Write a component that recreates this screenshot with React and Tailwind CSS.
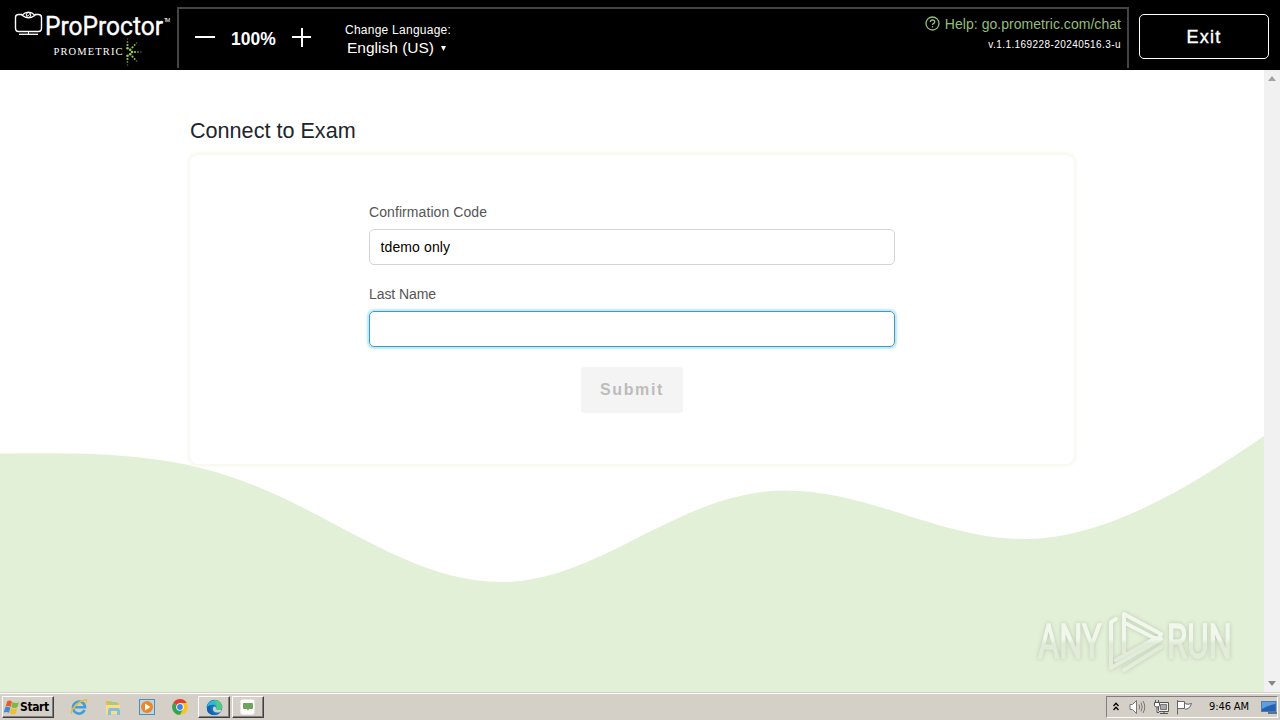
import React, { useState } from 'react'

const Logo = () => (
    <svg width="177" height="70" viewBox="0 0 177 70" fill="none" className="shrink-0">
        {/* monitor with the eye on top */}
        <path d="M22 14.5H18.5Q15.5 14.5 15.5 17.5V28Q15.5 31.5 18.5 31.5H38.5Q41.5 31.5 41.5 28V17.5Q41.5 14.5 38.5 14.5H35" stroke="#fff" strokeWidth="1.4" />
        <path d="M22 15.3Q28.5 9 35 15.3Q28.5 20.5 22 15.3Z" stroke="#fff" strokeWidth="1.2" />
        <circle cx="28.5" cy="15" r="2.3" stroke="#fff" />
        <path d="M27.2 15L28.2 16L30 13.5" stroke="#fff" strokeWidth="0.8" />
        <path d="M19 34.3H38" stroke="#fff" strokeWidth="1.3" />
        <path d="M28.5 31.5V34" stroke="#fff" />
        <text x="45" y="34.5" fontFamily="Roboto, sans-serif" fontSize="25" fill="#fff" stroke="#fff" strokeWidth="0.35" textLength="118" lengthAdjust="spacingAndGlyphs">ProProctor</text>
        <text x="164" y="22" fontFamily="Roboto, sans-serif" fontSize="5" fill="#fff" textLength="6">TM</text>
        <text x="53.5" y="55" fontFamily="Liberation Serif, serif" fontSize="10.5" fill="#fff" textLength="69" lengthAdjust="spacing">PROMETRIC</text>
        <g fill="#9ccb4e">
            <circle cx="127.5" cy="39" r="0.8" opacity="0.5" />
            <circle cx="127.5" cy="42" r="0.9" opacity="0.7" />
            <circle cx="127.5" cy="45" r="1.1" />
            <circle cx="127.5" cy="48.3" r="1.3" />
            <circle cx="127.5" cy="55.7" r="1.3" />
            <circle cx="127.5" cy="59" r="1.1" />
            <circle cx="127.5" cy="62" r="0.9" opacity="0.7" />
            <circle cx="127.5" cy="65" r="0.8" opacity="0.5" />
            <circle cx="130.2" cy="49.8" r="1.3" />
            <circle cx="132.5" cy="47.3" r="1.1" />
            <circle cx="134.6" cy="45" r="0.9" />
            <circle cx="136.5" cy="43" r="0.8" opacity="0.6" />
            <circle cx="130.2" cy="54.2" r="1.3" />
            <circle cx="132.5" cy="56.7" r="1.1" />
            <circle cx="134.6" cy="59" r="0.9" />
            <circle cx="136.5" cy="61" r="0.8" opacity="0.6" />
            <circle cx="132" cy="52" r="1.3" />
            <circle cx="135" cy="52" r="1.1" />
            <circle cx="138" cy="52" r="0.9" opacity="0.7" />
            <circle cx="141" cy="52" r="0.8" opacity="0.5" />
        </g>
    </svg>
)

const Header = () => (
    <header className="flex h-[70px] shrink-0 bg-black text-white">
        <Logo />
        <div className="mt-[7px] flex h-[61px] w-[952px] justify-between border-x-2 border-t-2 border-[#444]">
            <div className="flex">
                <div className="flex h-[58px] items-center pl-4">
                    <button aria-label="Zoom out" className="h-5 w-5">
                        <svg width="20" height="20"><path d="M0 9H20" stroke="#fff" strokeWidth="2" /></svg>
                    </button>
                    <span className="ml-4 w-[46px] pt-[2px] text-[17.5px] font-bold">100%</span>
                    <button aria-label="Zoom in" className="ml-[15px] h-5 w-5">
                        <svg width="20" height="20"><path d="M0 9H19M10 -1V19" stroke="#fff" strokeWidth="2" /></svg>
                    </button>
                </div>
                <div className="ml-[33px] pt-[13px]">
                    <p className="text-[12px] leading-4 tracking-[0.25px]">Change Language:</p>
                    <button className="flex items-center pl-[2px] text-[15.5px] leading-5">
                        English (US)
                        <svg width="5" height="5" className="ml-[7px]"><path d="M0 0H5L2.5 5Z" fill="#fff" /></svg>
                    </button>
                </div>
            </div>
            <div className="flex flex-col items-end pt-[5px] pr-[6px]">
                <a className="flex items-center text-[14px] leading-5 tracking-[0.04px] text-[#94bd7c]">
                    <svg width="15" height="15" viewBox="0 0 15 15" fill="none" className="mr-[5px] mb-[2px]">
                        <circle cx="7.5" cy="7.5" r="6.5" stroke="#94bd7c" strokeWidth="1.3" />
                        <path d="M5.3 6Q5.5 4 7.5 4Q9.7 4 9.7 6Q9.7 7 8.3 7.7Q7.5 8.1 7.5 9" stroke="#94bd7c" strokeWidth="1.3" />
                        <circle cx="7.5" cy="10.8" r="0.8" fill="#94bd7c" />
                    </svg>
                    Help: go.prometric.com/chat
                </a>
                <span className="mt-[3px] text-[10px] leading-4 tracking-[0.42px]">v.1.1.169228-20240516.3-u</span>
            </div>
        </div>
        <button className="mt-[14px] ml-[10px] h-[45px] w-[130px] rounded-[5px] border border-white pt-px text-[18px] font-medium tracking-[1.2px] [-webkit-text-stroke:0.4px_white]">
            Exit
        </button>
    </header>
)

const ConnectForm = () => {
    const [code, setCode] = useState('tdemo only');
    const [lastName, setLastName] = useState('');

    return (
        <div className="ml-[190px] w-[884px] pt-[46px]">
            <h1 className="h-[39px] text-[21.6px] leading-[30px] text-[#212529]">Connect to Exam</h1>
            <form className="flex h-[309px] flex-col items-center rounded-lg bg-white pt-[47px] shadow-[0_0_4px_2px_#f5f7ea]">
                <div className="w-[526px]">
                    <label className="block text-[14px] leading-5 tracking-[0.08px] text-[#555]">Confirmation Code</label>
                    <input
                        type="text"
                        className="mt-[7px] block h-9 w-full rounded-[5px] border border-[#d4d4d4] px-[10.5px] text-[14px] tracking-[0.12px] text-black outline-none"
                        value={code}
                        onChange={(e) => setCode(e.target.value)}
                    />
                </div>
                <div className="mt-[19px] w-[526px]">
                    <label className="block text-[14px] leading-5 tracking-[-0.08px] text-[#555]">Last Name</label>
                    <input
                        type="text"
                        className="mt-[7px] block h-9 w-full rounded-[5px] border border-[#3d9cc0] px-[11px] text-[14px] text-black shadow-[0_0_2px_2px_#b9e9fb] outline-none"
                        value={lastName}
                        onChange={(e) => setLastName(e.target.value)}
                    />
                </div>
                <button type="button" disabled className="mt-5 h-[46px] w-[102px] rounded-[3px] bg-[#f4f4f4] text-[16px] font-bold tracking-[1.6px] text-[#bcbcbc]">
                    Submit
                </button>
            </form>
        </div>
    )
}

const Wave = () => (
    <svg width="1264" height="622" viewBox="0 70 1264 622" className="absolute top-0 left-0">
        <path
            d="M0 453.5C100 452 170 454 240 480C335 514 410 582 502 582C600 582 680 490.5 785 490.5C870 490.5 940 539 1024 539C1110 539 1200 480 1264 436V692H0Z"
            fill="#e3f0d8"
        />
    </svg>
)

const Watermark = () => (
    <svg width="216" height="80" viewBox="0 0 216 80" className="absolute top-[536px] left-[1034px] drop-shadow-[0_0_2px_#8b9b8077]">
        <defs>
            <linearGradient id="fade" gradientUnits="userSpaceOnUse" x1="0" y1="0" x2="0" y2="70">
                <stop offset="0.47" stopColor="#f1f7ec" />
                <stop offset="0.54" stopColor="#e1ead8" />
                <stop offset="1" stopColor="#e6efde" />
            </linearGradient>
            <linearGradient id="textFade" gradientUnits="userSpaceOnUse" x1="0" y1="-52" x2="0" y2="18">
                <stop offset="0.47" stopColor="#f1f7ec" />
                <stop offset="0.54" stopColor="#e1ead8" />
                <stop offset="1" stopColor="#e6efde" />
            </linearGradient>
        </defs>
        <g fontFamily="Roboto, sans-serif" fontSize="49" fill="url(#textFade)" stroke="url(#textFade)" strokeWidth="1.4">
            <text transform="translate(4 52) scale(0.665 1)">ANY</text>
            <text transform="translate(133 52) scale(0.67 1)">RUN</text>
        </g>
        <g fill="none" stroke="url(#fade)" strokeWidth="4" strokeLinecap="round" strokeLinejoin="round">
            <path d="M82 13L77 16V62L127 33" />
            <path d="M90 47V8L127 28L124 34L91 17" />
            <path d="M82 54L122 32M90 64L127 41" />
        </g>
    </svg>
)

const ExamPage = () => (
    <main className="flex min-h-0 flex-1">
        <div className="relative w-[1264px] overflow-hidden bg-white">
            <Wave />
            <div className="relative">
                <ConnectForm />
            </div>
            <Watermark />
        </div>
        <div className="flex w-4 flex-col items-center justify-between bg-[#f1f1f1] pt-[6px] pb-[6px]">
            <svg width="8" height="5"><path d="M0 5H8L4 0Z" fill="#a3a3a3" /></svg>
            <svg width="8" height="5"><path d="M0 0H8L4 5Z" fill="#888" /></svg>
        </div>
    </main>
)

const IeIcon = () => (
    <svg width="18" height="18" viewBox="0 0 18 18" fill="none">
        <path d="M14.5 12A6 6 0 1 1 15 9.3H5" stroke="#3d9fdc" strokeWidth="2.6" />
        <path d="M2 16C-1 13 8 4 14 2Q18 1 16 5" stroke="#e8bd3c" strokeWidth="1.5" />
    </svg>
)

const FolderIcon = () => (
    <svg width="17" height="17" viewBox="0 0 17 17">
        <path d="M1 4V2H6L8 4H14V14H1Z" fill="#e9bb4e" />
        <path d="M3 3H12V8H3Z" fill="#a5c986" />
        <path d="M1 6H15V15H1Z" fill="#f8df83" />
        <path d="M3 16V11Q3 9 5 9H13Q15 9 15 11V16H12V12H6V16Z" fill="#82bfe3" />
    </svg>
)

const PlayerIcon = () => (
    <svg width="16" height="16" viewBox="0 0 16 16">
        <rect x="0.5" y="0.5" width="15" height="15" fill="#b9d8ec" stroke="#518bb8" />
        <circle cx="8" cy="8" r="6" fill="#f0861d" />
        <path d="M6 4.5L11.5 8L6 11.5Z" fill="#fff" />
    </svg>
)

const ChromeIcon = () => (
    <svg width="16" height="16" viewBox="0 0 16 16">
        <circle cx="8" cy="8" r="7.8" fill="#f9c51d" />
        <path d="M8 8L1.2 4.1A7.8 7.8 0 0 1 14.8 4.1H8Z" fill="#e04031" />
        <path d="M8 8L1.2 4.1A7.8 7.8 0 0 0 8 15.8L11 10Z" fill="#35a354" />
        <circle cx="8" cy="8" r="3.8" fill="#fff" />
        <circle cx="8" cy="8" r="2.9" fill="#3e82e5" />
    </svg>
)

const EdgeIcon = () => (
    <svg width="17" height="17" viewBox="0 0 17 17">
        <circle cx="8.5" cy="8.5" r="7.8" fill="#1474c4" />
        <path d="M1 8A7.7 7.7 0 0 1 16.3 8C16 11 12 11.5 10 10C12 6 6 4 1 8Z" fill="#32b9cd" />
        <path d="M8 1A7.5 7.5 0 0 1 16.3 8C16 11 12 11.5 10 10Q12 5 8 1Z" fill="#54c984" />
        <path d="M10 10Q12 11.6 15.5 10.5L14.5 13Q10 14.5 7.5 12Q6 9 8 7.5Q10.5 7 10 10Z" fill="#d4d0c8" />
        <path d="M5 6Q2 11 9 16Q0 16 1 8Z" fill="#1460a9" />
    </svg>
)

const ChatIcon = () => (
    <svg width="16" height="16" viewBox="0 0 16 16">
        <rect x="0.5" y="0.5" width="14" height="15" rx="2" fill="#fff" />
        <path d="M4 4H12Q13 4 13 5V9Q13 10 12 10H9L8 12L7 10H4Q3 10 3 9V5Q3 4 4 4Z" fill="#6da35a" />
    </svg>
)

const StartFlag = () => (
    <svg width="17" height="17" viewBox="0 0 16 16" className="shrink-0">
        <path d="M4 2Q6.5 .5 8.5 2.5L7.2 7.6Q5 6 2.4 7.2Z" fill="#e75d2b" />
        <path d="M9 2.8Q12 4.5 15 3L13.6 7.8Q11 9.2 7.8 7.7Z" fill="#7db843" />
        <path d="M2.2 7.8Q4.5 6.6 7 8.2L5.6 13Q3.2 11.6 .6 12.8Z" fill="#3e8cd5" />
        <path d="M7.6 8.4Q10.5 10 13.4 8.7L11.9 13.8Q9 15 6.2 13.4Z" fill="#f1bd32" />
    </svg>
)

const Tray = () => (
    <div className="mt-[3px] mr-[2px] flex h-[22px] w-[172px] items-center border border-t-[#808080] border-r-white border-b-white border-l-[#808080] pl-[6px]">
        <svg width="6" height="9" viewBox="0 0 6 9" fill="none" stroke="#000" strokeWidth="1.3" className="mb-[2px]"><path d="M0.5 4L3 1.3L5.5 4M0.5 8L3 5.3L5.5 8" /></svg>
        <svg width="17" height="16" viewBox="0 0 17 16" fill="none" stroke="#777" className="ml-[10px]">
            <path d="M1 5.5H3.5L7.5 1.5V14.5L3.5 10.5H1Z" fill="#fff" />
            <path d="M10 5.5Q11.5 8 10 10.5M12 3.5Q14.5 8 12 12.5M14 2Q17.5 8 14 14" />
        </svg>
        <svg width="17" height="16" viewBox="0 0 17 16" fill="none" stroke="#555" className="ml-[7px]">
            <path d="M5.5 3.5H15.5V12.5H5.5Z" fill="#eee" />
            <path d="M7.5 5.5H13.5V10.5H7.5Z" fill="#aaa" stroke="#777" />
            <path d="M7 14.5H15M11 12.5V14.5" />
            <path d="M1.5 3.5H6.5V6.5Q6.5 8 4 8Q1.5 8 1.5 6.5ZM2.5 1V3.5M5.5 1V3.5M4 8V13.5H6" fill="#fff" />
        </svg>
        <svg width="17" height="16" viewBox="0 0 17 16" fill="#fff" stroke="#666" className="ml-[6px]">
            <path d="M1.5 1V15.5M1.5 2.5H8.5V9.5H1.5M8.5 4.5Q12 6 15.5 4.5Q14.5 9 11 10Q9 10.5 8.5 9.5" />
        </svg>
        <span className="ml-4 w-[42px] pt-px font-['DejaVu_Sans_Condensed','Noto_Sans',sans-serif] text-[11px] tracking-[-0.1px] whitespace-nowrap text-black">9:46 AM</span>
        <svg width="16" height="14" viewBox="0 0 16 14" className="ml-[10px] shrink-0">
            <rect x="0.5" y="1.5" width="14.5" height="10" fill="#285fae" stroke="#4b7daf" />
            <path d="M1 2H14.5V4Q7 5 1 9Z" fill="#5d9ee0" />
            <path d="M7 12H16V14H7Z" fill="#5b7490" />
        </svg>
    </div>
)

const Taskbar = () => (
    <footer className="flex h-7 shrink-0 justify-between border-t border-[#d4d0c8] bg-[#d4d0c8] shadow-[inset_0_1px_0_#fff]">
        <div className="flex items-start pt-[3px]">
            <button className="ml-[2px] flex h-[22px] w-[52px] items-center border border-t-white border-r-[#404040] border-b-[#404040] border-l-white shadow-[inset_-1px_-1px_0_#808080]">
                <StartFlag />
                <span className="font-['DejaVu_Sans_Condensed','Noto_Sans',sans-serif] text-[12px] font-bold tracking-[-0.4px] text-black">Start</span>
            </button>
            <div className="ml-4 flex h-[22px] items-center gap-[17px]">
                <IeIcon />
                <FolderIcon />
                <PlayerIcon />
                <ChromeIcon />
            </div>
            <div className="ml-[10px] flex gap-[2px]">
                <button className="flex h-[22px] w-8 items-center justify-center border border-t-white border-r-[#404040] border-b-[#404040] border-l-white shadow-[inset_-1px_-1px_0_#808080]">
                    <EdgeIcon />
                </button>
                <button className="flex h-[22px] w-8 items-center justify-center border border-t-white border-r-[#404040] border-b-[#404040] border-l-white shadow-[inset_-1px_-1px_0_#808080]">
                    <ChatIcon />
                </button>
            </div>
        </div>
        <Tray />
    </footer>
)

const App = () => {
    return (
        <div className="flex h-[720px] w-[1280px] flex-col overflow-hidden font-['Liberation_Sans',Arial,sans-serif]">
            <Header />
            <ExamPage />
            <Taskbar />
        </div>
    )
}

export default App
